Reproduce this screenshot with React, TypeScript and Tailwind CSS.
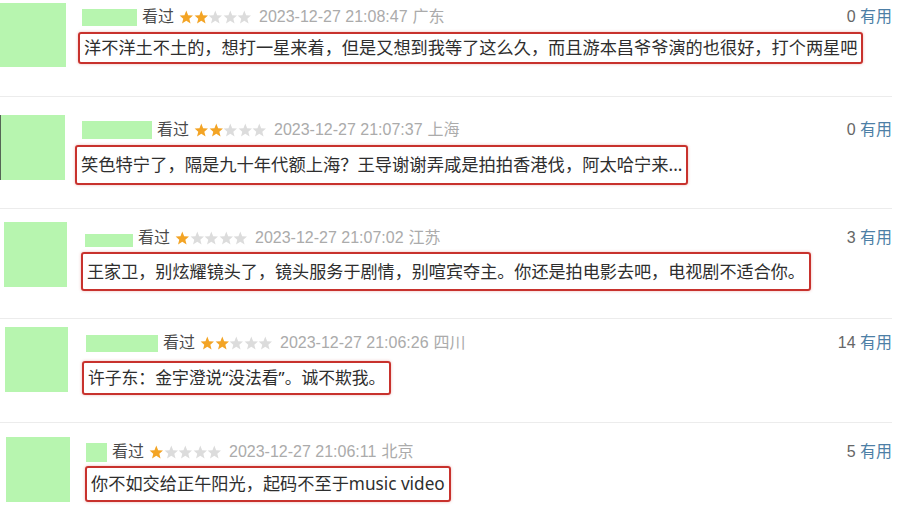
import React from 'react';

type Row = {
  rowCls: string;
  avatarCls: string;
  bodyCls: string;
  headCls: string;
  nameCls: string;
  boxCls: string;
  rating: number;
  time: string;
  place: string;
  useful: number;
  text: string;
};

const rows: Row[] = [
  {
    rowCls: 'h-[97px] border-b border-[#ececec]',
    avatarCls: 'mt-[3px] ml-0 w-[66px] h-[64px]',
    bodyCls: 'ml-[12px] mt-[6px]',
    headCls: 'pl-[4px]',
    nameCls: 'w-[55px] h-[17px]',
    boxCls: 'mt-[4px] h-[32px] text-[17.2px]',
    rating: 2,
    time: '2023-12-27 21:08:47',
    place: '广东',
    useful: 0,
    text: '洋不洋土不土的，想打一星来着，但是又想到我等了这么久，而且游本昌爷爷演的也很好，打个两星吧',
  },
  {
    rowCls: 'h-[112px] border-b border-[#ececec]',
    avatarCls: 'mt-[18px] ml-0 w-[65px] h-[65px] border-l border-[#556655]',
    bodyCls: 'ml-[10px] mt-[22px]',
    headCls: 'pl-[7px]',
    nameCls: 'w-[70px] h-[18px]',
    boxCls: 'mt-[4px] h-[40px] text-[17.3px]',
    rating: 2,
    time: '2023-12-27 21:07:37',
    place: '上海',
    useful: 0,
    text: '笑色特宁了，隔是九十年代额上海？王导谢谢弄咸是拍拍香港伐，阿太哈宁来...',
  },
  {
    rowCls: 'h-[110px] border-b border-[#ececec]',
    avatarCls: 'mt-[13px] ml-[4px] w-[63px] h-[65px]',
    bodyCls: 'ml-[14px] mt-[18px]',
    headCls: 'pl-[4px]',
    nameCls: 'w-[48px] h-[13px] mt-[4px]',
    boxCls: 'mt-[3px] h-[39px] text-[17.1px]',
    rating: 1,
    time: '2023-12-27 21:07:02',
    place: '江苏',
    useful: 3,
    text: '王家卫，别炫耀镜头了，镜头服务于剧情，别喧宾夺主。你还是拍电影去吧，电视剧不适合你。',
  },
  {
    rowCls: 'h-[104px] border-b border-[#ececec]',
    avatarCls: 'mt-[8px] ml-[5px] w-[63px] h-[65px]',
    bodyCls: 'ml-[14px] mt-[13px]',
    headCls: 'pl-[4px]',
    nameCls: 'w-[72px] h-[17px]',
    boxCls: 'mt-[7px] h-[34px] text-[16.8px]',
    rating: 2,
    time: '2023-12-27 21:06:26',
    place: '四川',
    useful: 14,
    text: '许子东：金宇澄说“没法看”。诚不欺我。',
  },
  {
    rowCls: 'h-[98px]',
    avatarCls: 'mt-[14px] ml-[6px] w-[64px] h-[65px]',
    bodyCls: 'ml-[15px] mt-[18px]',
    headCls: 'pl-[1px]',
    nameCls: 'w-[21px] h-[19px]',
    boxCls: 'mt-[3px] h-[36px] text-[17.2px]',
    rating: 1,
    time: '2023-12-27 21:06:11',
    place: '北京',
    useful: 5,
    text: '你不如交给正午阳光，起码不至于music video',
  },
];

const Star = ({ on }: { on: boolean }) => (
  <svg width="14.6" height="14" viewBox="0 0 24 23">
    <polygon
      points="12,1 15,8.6 23,9 17,14.4 19,22 12,17.8 5,22 7,14.4 1,9 9,8.6"
      fill={on ? '#f3a425' : '#dcdcdc'}
    />
  </svg>
);

const Stars = ({ n }: { n: number }) => (
  <div className="flex items-center ml-[5px]">
    {[0, 1, 2, 3, 4].map((i) => (
      <Star key={i} on={i < n} />
    ))}
  </div>
);

export default function App() {
  return (
    <div
      className="w-[899px] h-[521px] bg-white overflow-hidden"
      style={{ fontFamily: '"Liberation Sans", "Noto Sans CJK SC", sans-serif' }}
    >
      {rows.map((r, idx) => (
        <div key={idx} className={`flex mr-[7px] ${r.rowCls}`}>
          <div className={`shrink-0 bg-[#b7f5af] ${r.avatarCls}`} />
          <div className={`flex-1 flex flex-col items-start ${r.bodyCls}`}>
            <div className={`flex items-center h-[22px] w-full text-[16px] ${r.headCls}`}>
              <div className={`bg-[#b7f5af] shrink-0 ${r.nameCls}`} />
              <span className="ml-[5px] text-[#4a4a4a]">看过</span>
              <Stars n={r.rating} />
              <span className="ml-[7px] text-[#ababab]">{r.time}</span>
              <span className="ml-[5px] text-[#ababab]">{r.place}</span>
              <span className="ml-auto text-[#666]">
                {r.useful} <span className="text-[#4d7fa6]">有用</span>
              </span>
            </div>
            <div
              className={`flex items-center px-[4px] border-2 border-[#c8322d] rounded-[3px] shadow-[0_0_3px_rgba(200,50,45,0.35)] text-[#2e2e2e] whitespace-nowrap font-['Noto_Sans','Noto_Sans_CJK_SC',sans-serif] ${r.boxCls}`}
            >
              {r.text}
            </div>
          </div>
        </div>
      ))}
    </div>
  );
}
